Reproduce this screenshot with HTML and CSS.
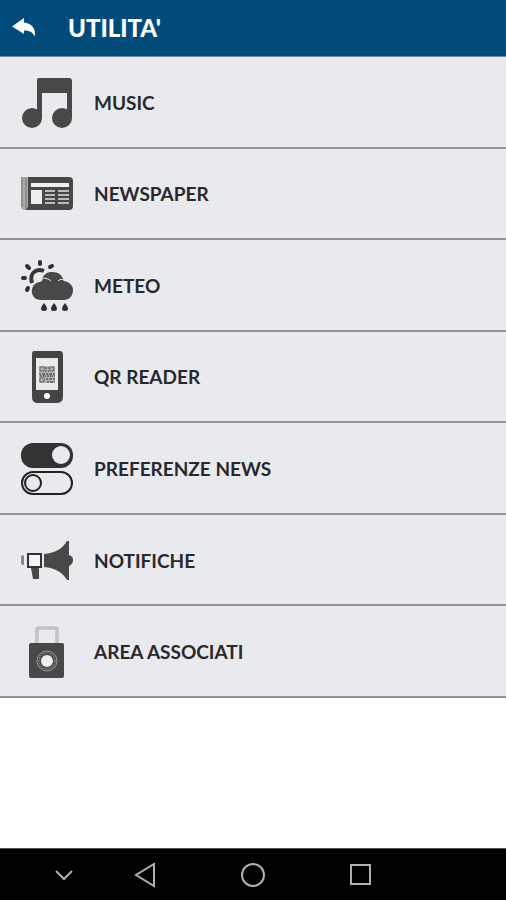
FILE: index.html
```html
<!DOCTYPE html>
<html lang="it">
<head>
    <meta charset="UTF-8">
    <meta name="viewport" content="width=device-width, initial-scale=1.0">
    <title>Utilita'</title>
    <link rel="stylesheet" href="styles.css">
</head>
<body>
    <header class="topbar">
        <button type="button" class="back" aria-label="Indietro">
            <svg viewBox="0 0 24 20" width="24" height="20">
                <path fill="#fff" d="M0 8.500 12 0V4.500C19 5 24 10 23 18.500C20.500 14 17 12.500 12 12.500V16Z"/>
            </svg>
        </button>
        <h1>UTILITA'</h1>
    </header>

    <main>
        <ul class="menu">
            <li>
                <a href="#music">
                    <svg class="icon" viewBox="0 0 52 52">
                        <path fill="#484848" d="M18 1H48Q51 1 51 4V41H46V16H21V41H16V3Q16 1 18 1Z"/>
                        <circle cx="11" cy="41" r="10" fill="#484848"/>
                        <circle cx="41" cy="41" r="10" fill="#484848"/>
                    </svg>
                    <span>MUSIC</span>
                </a>
            </li>
            <li>
                <a href="#newspaper">
                    <svg class="icon" viewBox="0 0 52 52">
                        <path fill="#aaa" d="M0 9H8V42H4Q0 42 0 38Z"/>
                        <path stroke="#777" d="M1 9V39M5 10V41"/>
                        <path fill="#484848" d="M7 9H48Q52 9 52 13V38Q52 42 48 42H4Q7 41 7 37Z"/>
                        <path fill="#eeeff1" d="M10 15H48V19H10ZM10 22H21V36H10Z"/>
                        <path stroke="#bbb" stroke-width="2" d="M24 23H34M37 23H48M24 27H34M37 27H48M24 31H34M37 31H48M24 35H34M37 35H48"/>
                    </svg>
                    <span>NEWSPAPER</span>
                </a>
            </li>
            <li>
                <a href="#meteo">
                    <svg class="icon" viewBox="0 0 52 52">
                        <path fill="none" stroke="#383838" stroke-width="4" d="M11 23C8 13 15 8 23 11"/>
                        <path stroke="#303030" stroke-width="4" stroke-linecap="round" d="M19 2V4M6 6 8 8M31 6 29 7M2 18H4M6 30 7 28"/>
                        <path fill="#484848" d="M21 18C24 14 26 12 31 12C38 12 41 15 43 21C49 22 52 26 52 30C52 36 48 40 43 40H20C8 40 8 23 19 22Q23 20 21 18Z"/>
                        <path fill="none" stroke="#e9eaee" d="M21 18C25 18 28 19 30 21M37 21C39 19 41 19 43 20"/>
                        <path fill="#303030" d="M23 43C27 48 27 51 23 51S19 48 23 43ZM33 43C37 48 37 51 33 51S29 48 33 43ZM44 43C48 48 48 51 44 51S40 48 44 43Z"/>
                    </svg>
                    <span>METEO</span>
                </a>
            </li>
            <li>
                <a href="#qr-reader">
                    <svg class="icon" viewBox="0 0 52 52">
                        <path fill="#444" d="M13 0H39Q42 0 42 4V46Q42 52 35 52H17Q11 52 11 46V4Q11 0 13 0Z"/>
                        <path fill="#e9eaee" d="M15 7H37V39H15Z"/>
                        <circle cx="26" cy="45" r="3" fill="#fff"/>
                        <path fill="#b4b4b6" d="M18 15H34V32H18Z"/>
                        <path fill="none" stroke="#666" stroke-width="1" d="M19 16H23V20H19ZM29 16H33V20H29ZM19 27H23V31H19Z"/>
                        <path fill="none" stroke="#707070" stroke-width="2" stroke-dasharray="2 1 3 1" d="M24 17H28M24 20H28M18 23H34M19 25H34M25 28H34M26 31H34"/>
                    </svg>
                    <span>QR READER</span>
                </a>
            </li>
            <li>
                <a href="#preferenze-news">
                    <svg class="icon" viewBox="0 0 52 52">
                        <rect x="0" y="0" width="52" height="25" rx="12" fill="#333"/>
                        <circle cx="40" cy="12" r="9" fill="#e9eaee"/>
                        <rect x="1" y="29" width="50" height="22" rx="11" fill="none" stroke="#222" stroke-width="2"/>
                        <circle cx="12" cy="40" r="8" fill="none" stroke="#222" stroke-width="2"/>
                    </svg>
                    <span>PREFERENZE NEWS</span>
                </a>
            </li>
            <li>
                <a href="#notifiche">
                    <svg class="icon" viewBox="0 0 52 52">
                        <path fill="#888" d="M0 22Q0 20 3 20V30Q0 30 0 28Z"/>
                        <path fill="#f4f4f6" stroke="#333" stroke-width="2" d="M7 19H20V32H7Z"/>
                        <path fill="#484848" d="M10 33H18V44H12ZM23 19C35 18 42 13 46 6H48V45H46C42 38 35 33 23 32ZM48 20Q52 21 52 25T48 31Z"/>
                    </svg>
                    <span>NOTIFICHE</span>
                </a>
            </li>
            <li>
                <a href="#area-associati">
                    <svg class="icon" viewBox="0 0 52 52">
                        <path fill="none" stroke="#aaa" stroke-width="3" d="M16 17V4Q16 2 18 2H34Q36 2 36 4V17"/>
                        <path fill="none" stroke="#ddd" stroke-width="1" d="M16 17V4Q16 2 18 2H34Q36 2 36 4V17"/>
                        <rect x="8" y="17" width="35" height="35" rx="2" fill="#484848"/>
                        <circle cx="26" cy="35" r="10" fill="none" stroke="#999" stroke-width="1"/>
                        <circle cx="26" cy="35" r="8" fill="none" stroke="#999" stroke-width="1" stroke-dasharray="2 1"/>
                        <circle cx="26" cy="35" r="6" fill="#eee"/>
                    </svg>
                    <span>AREA ASSOCIATI</span>
                </a>
            </li>
        </ul>
    </main>

    <nav class="system-bar">
        <button type="button" class="hide-bar" aria-label="Nascondi barra">
            <svg viewBox="0 0 28 28"><path d="M6 10 14 18 22 10"/></svg>
        </button>
        <button type="button" aria-label="Indietro">
            <svg viewBox="0 0 28 28"><path d="M23 3V25L5 14Z"/></svg>
        </button>
        <button type="button" aria-label="Home">
            <svg viewBox="0 0 28 28"><circle cx="14" cy="14" r="11"/></svg>
        </button>
        <button type="button" aria-label="Recenti">
            <svg viewBox="0 0 28 28"><rect x="4" y="4" width="19" height="19"/></svg>
        </button>
    </nav>
</body>
</html>
```

FILE: styles.css
```css
* {
    margin: 0;
    padding: 0;
    box-sizing: border-box;
}

body {
    font-family: Lato, 'Open Sans', sans-serif;
    background-color: #fff;
    min-height: 100vh;
    display: flex;
    flex-direction: column;
}

button {
    background: none;
    border: none;
    cursor: pointer;
}

svg {
    display: block;
    flex-shrink: 0;
}

.topbar {
    display: flex;
    align-items: center;
    gap: 32px;
    height: 57px;
    padding: 0 12px;
    background-color: #004b79;
    border-bottom: 1px solid #75899b;
    color: white;
}

.topbar h1 {
    font-size: 24px;
    font-weight: 900;
    line-height: 32px;
}

main {
    flex: 1;
}

.menu {
    display: grid;
    grid-auto-rows: 1fr;
    min-height: 641px;
    list-style: none;
}

.menu li {
    display: grid;
    background-color: #e9eaee;
    border-bottom: 2px solid #929397;
}

.menu a {
    display: flex;
    align-items: center;
    gap: 21px;
    padding: 2px 21px 0;
    color: #29292d;
    font-size: 19px;
    font-weight: bold;
    line-height: 24px;
    text-decoration: none;
}

.icon {
    width: 52px;
    height: 52px;
}

.system-bar {
    display: grid;
    grid-template-columns: 1fr repeat(3, 108px) 1fr;
    align-items: center;
    justify-items: center;
    height: 52px;
    background-color: #000;
    border-top: 1px solid #555;
}

.system-bar svg {
    width: 28px;
    height: 28px;
    fill: none;
    stroke: #b0b0b0;
    stroke-width: 2;
}

.system-bar .hide-bar {
    justify-self: end;
    margin-right: 13px;
}
```
